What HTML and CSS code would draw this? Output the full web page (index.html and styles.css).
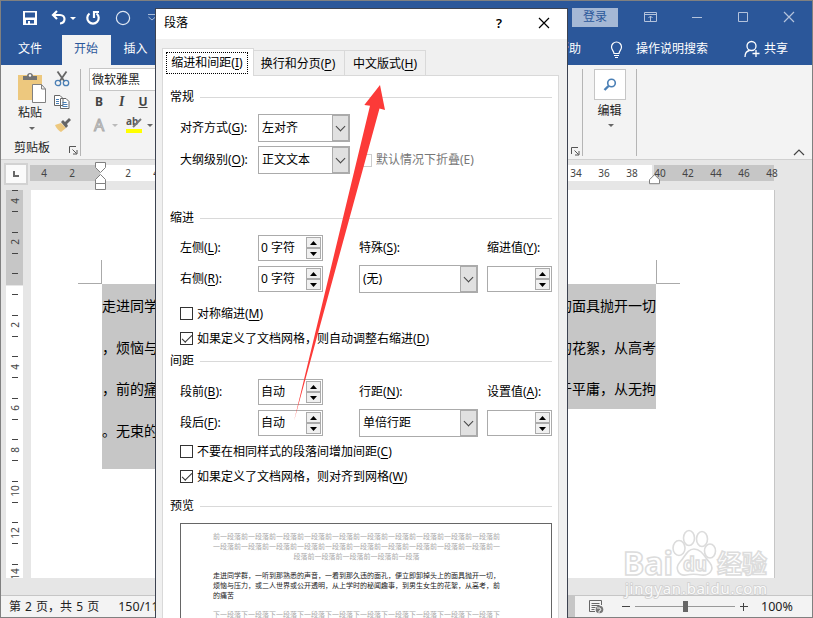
FILE: index.html
```html
<!DOCTYPE html>
<html lang="zh-CN">
<head>
    <meta charset="UTF-8">
    <meta name="viewport" content="width=device-width, initial-scale=1.0">
    <title>段落</title>
    <link rel="stylesheet" href="styles.css">
</head>
<body>
<div class="window">
    <header class="titlebar">
        <div class="quick">
            <svg width="16" height="16" viewBox="0 0 16 16"><path fill="#fff" fill-rule="evenodd" d="M1 1h14v14H1zM3 2.5v5h10v-5zM4 10v3.5h2V11h2v2.5h4V10z"/></svg>
            <svg class="undo" width="16" height="16" viewBox="0 0 16 16" fill="none" stroke="#fff" stroke-width="2.2"><path d="M6 1 2 5l4 4M2.5 5H9c6 0 6 8 0 8.5"/></svg>
            <i class="caret white"></i>
            <svg class="redo" width="16" height="16" viewBox="0 0 16 16" fill="none" stroke="#fff" stroke-width="2.2"><path d="M4.500 3.500A5.700 5.700 0 1 0 11.500 3.500M9 8V2h5"/></svg>
            <svg class="circle" width="16" height="16" viewBox="0 0 16 16" fill="none" stroke="#dfe7f3" stroke-width="1.2"><circle cx="8" cy="8" r="6.6"/></svg>
            <svg class="more" width="8" height="8" viewBox="0 0 8 8" fill="none" stroke="#a9bcd8"><path d="M0 .5h8M.5 3 4 6l3.5-3"/></svg>
        </div>
        <div class="controls">
            <span class="login">登录</span>
            <svg class="c1" width="14" height="12" viewBox="0 0 14 12" fill="none" stroke="#b4c3dc"><path d="M.5 1.5h12v9H.5zM.5 3.5h12M6.5 10V5M4.5 7l2-2 2 2"/></svg>
            <svg class="c2" width="10" height="12" viewBox="0 0 10 12" stroke="#b4c3dc"><path d="M0 6.5h10"/></svg>
            <svg class="c3" width="11" height="12" viewBox="0 0 11 12" fill="none" stroke="#b4c3dc"><path d="M.5 1.5h9v9h-9z"/></svg>
            <svg class="c4" width="12" height="12" viewBox="0 0 12 12" fill="none" stroke="#b4c3dc" stroke-width="1.2"><path d="m1 1 10 10M11 1 1 11"/></svg>
        </div>
    </header>
    <nav class="tabs">
        <span class="tab file">文件</span>
        <span class="tab on">开始</span>
        <span class="tab">插入</span>
        <div class="tell">
            <span>帮助</span>
            <svg class="bulb" width="13" height="18" viewBox="0 0 13 18" fill="none" stroke="#fff" stroke-width="1.2"><path d="M4 12.500C4 10 1.500 9 1.500 6a5 5 0 0 1 10 0c0 3-2.500 4-2.500 6.500zM4 14.500h5M5 16.500h3"/></svg>
            <span>操作说明搜索</span>
            <svg class="person" width="16" height="18" viewBox="0 0 16 18" fill="none" stroke="#fff" stroke-width="1.3"><circle cx="7.5" cy="6" r="4.5"/><path d="M1 17c0-4 2-6 4.500-6.500M12 10v7M8.500 13.500h7"/></svg>
            <span>共享</span>
        </div>
    </nav>
    <section class="ribbon">
        <div class="clipboard">
            <div class="group-top">
                <div class="paste">
                    <svg width="30" height="32" viewBox="0 0 30 32"><path fill="#edc87e" d="M1 3h24v25H1z"/><path fill="#737373" d="M6 8V4h4C10 0 16 0 16 4h4v4z"/><circle cx="13" cy="3.500" r="1.200" fill="#fff"/><path fill="#fff" stroke="#808080" d="M15.500 12.500h9l4 4.500v13.500h-13zM24.500 12.500V17h4"/></svg>
                    <span>粘贴</span>
                    <i class="caret"></i>
                </div>
                <div class="small-icons">
                    <svg width="16" height="16" viewBox="0 0 16 16" fill="none"><path stroke="#666" stroke-width="1.8" d="m3.500.5 7 10M12.500.5l-7 10"/><circle cx="4" cy="12" r="2.700" stroke="#4a7fb5" stroke-width="1.3"/><circle cx="12" cy="12" r="2.700" stroke="#4a7fb5" stroke-width="1.3"/></svg>
                    <svg width="16" height="16" viewBox="0 0 16 16" fill="#fff" stroke="#666"><path d="M.5 1.500H6l3 3v7H.5zM6.500 4.500H12l3 3v7H6.500z"/><path stroke="#4a7fb5" d="M2 5.500h3M2 7.500h3M2 9.500h3M8.500 8.500h4M8.500 10.500h5M8.500 12.500h5"/></svg>
                    <svg width="17" height="16" viewBox="0 0 17 16"><path fill="#edc87e" d="m1 8 6-2 5 5-5 4c-2-1-5-4-6-7z"/><path fill="#666" d="m7 5 2-2 2 2 4-4 2 2-4 4 1 2-2 2z"/></svg>
                </div>
            </div>
            <div class="group-name"><span>剪贴板</span>
                <svg width="9" height="9" viewBox="0 0 9 9" fill="none" stroke="#555"><path d="M.5 7V.5H7M3.500 3.500l4 4M8 4v4H4"/></svg>
            </div>
        </div>
        <div class="font">
            <div class="font-name">微软雅黑</div>
            <div class="styles"><b>B</b><i>I</i><u>U</u></div>
            <div class="colors">
                <span class="fx">A</span><i class="caret light"></i>
                <svg width="18" height="18" viewBox="0 0 18 18"><text x="0" y="9" font-size="10" font-weight="700" fill="#555">ab</text><path stroke="#777" stroke-width="2" d="m15 3-8 8"/><path fill="#ff0" d="M0 13h16v4H0z"/></svg>
                <i class="caret"></i>
            </div>
        </div>
        <div class="editing">
            <svg class="launch" width="9" height="9" viewBox="0 0 9 9" fill="none" stroke="#555"><path d="M.5 7V.5H7M3.500 3.500l4 4M8 4v4H4"/></svg>
            <div class="find-group">
                <div class="find"><svg width="14" height="14" viewBox="0 0 14 14" fill="none" stroke="#4a7fb5"><circle cx="8.5" cy="5" r="3.8" stroke-width="1.6"/><path stroke-width="2.4" d="M5.500 8 1.500 12"/></svg></div>
                <span>编辑</span>
                <i class="caret"></i>
            </div>
            <svg class="collapse" width="12" height="7" viewBox="0 0 12 7" fill="none" stroke="#444" stroke-width="1.2"><path d="m1 6 5-5 5 5"/></svg>
        </div>
    </section>
    <div class="hruler">
        <div class="corner"><span></span></div>
        <div class="track">
            <span>4</span><span>2</span><span></span><span>2</span><span>4</span><span class="covered"></span><span>34</span><span>36</span><span>38</span><span>40</span><span>42</span><span>44</span><span>46</span><span>48</span>
            <svg class="indent-left" width="12" height="29" viewBox="0 0 12 29" fill="#fff" stroke="#808080"><path d="M.5.500h10v5l-5 5-5-5zM5.500 12.500l5 5v4H.5v-4zM.5 21.500h10v6H.5z"/></svg>
            <svg class="indent-right" width="12" height="11" viewBox="0 0 12 11" fill="#fff" stroke="#808080"><path d="m5.500.700 5 5v4H.5v-4z"/></svg>
        </div>
    </div>
    <main class="work">
        <div class="vruler">
            <div><span>4</span></div><div><span>2</span></div><div></div><div><span>2</span></div><div><span>4</span></div><div><span>6</span></div><div><span>8</span></div><div><span>10</span></div><div><span>12</span></div><div><span>14</span></div>
        </div>
        <div class="page">
            <div class="crop"><i></i><i></i></div>
            <div class="text">
                <p><span>走进同学</span><span>的面具抛开一切</span></p>
                <p><span>，烦恼与</span><span>的花絮，从高考</span></p>
                <p><span>，前的<u>痛</u></span><span>于平庸，从无拘</span></p>
                <p class="last"><span>。无束的</span></p>
            </div>
        </div>
    </main>
    <footer class="status">
        <span class="pages">第 2 页，共 5 页</span>
        <span class="words">150/11</span>
        <div class="zoom">
            <i class="view"></i>
            <svg class="web" width="15" height="14" viewBox="0 0 15 14" fill="none" stroke="#666"><path d="M12.500 5V.5H.5v11H6M2.500 3.500h8M2.500 5.500h8M2.500 7.500h4M2.500 9.500h3"/><circle cx="10.500" cy="9.500" r="3.800" fill="#777" stroke="none"/><path stroke="#eee" d="M8 8h3l1 2-2 1v2"/></svg>
            <svg width="8" height="8" viewBox="0 0 8 8" stroke="#444"><path d="M0 3.500h8"/></svg>
            <div class="slider"><b></b></div>
            <svg width="8" height="8" viewBox="0 0 8 8" stroke="#444"><path d="M0 3.500h8M3.500 0v8"/></svg>
            <span class="percent">100%</span>
        </div>
    </footer>
</div>

<div class="dialog">
    <div class="dialog-title">
        <span>段落</span>
        <b>?</b>
        <svg width="12" height="12" viewBox="0 0 12 12" fill="none" stroke="#000" stroke-width="1.2"><path d="m1 1 10 10M11 1 1 11"/></svg>
    </div>
    <div class="dialog-tabs">
        <span class="active"><em>缩进和间距(<u>I</u>)</em></span><span class="wide">换行和分页(<u>P</u>)</span><span>中文版式(<u>H</u>)</span>
    </div>
    <div class="panel">
        <h3>常规</h3>
        <div class="grid general">
            <label>对齐方式(<u>G</u>):</label>
            <div class="combo short"><span>左对齐</span><i></i></div>
            <label class="outline">大纲级别(<u>O</u>):</label>
            <div class="combo short"><span>正文文本</span><i></i></div>
            <label class="check disabled"><i></i><span>默认情况下折叠(E)</span></label>
        </div>
        <h3 class="indent-title">缩进</h3>
        <div class="grid">
            <label>左侧(<u>L</u>):</label>
            <div class="spin"><span>0 字符</span><i></i></div>
            <label>特殊(<u>S</u>):</label>
            <label>缩进值(<u>Y</u>):</label>
            <label>右侧(<u>R</u>):</label>
            <div class="spin"><span>0 字符</span><i></i></div>
            <div class="combo"><span>(无)</span><i></i></div>
            <div class="spin"><span></span><i></i></div>
        </div>
        <div class="checks indent-checks">
            <label class="check"><i></i><span>对称缩进(<u>M</u>)</span></label>
            <label class="check on"><i></i><span>如果定义了文档网格，则自动调整右缩进(<u>D</u>)</span></label>
        </div>
        <h3>间距</h3>
        <div class="grid">
            <label>段前(<u>B</u>):</label>
            <div class="spin"><span>自动</span><i></i></div>
            <label>行距(<u>N</u>):</label>
            <label>设置值(<u>A</u>):</label>
            <label>段后(<u>F</u>):</label>
            <div class="spin"><span>自动</span><i></i></div>
            <div class="combo"><span>单倍行距</span><i></i></div>
            <div class="spin"><span></span><i></i></div>
        </div>
        <div class="checks">
            <label class="check"><i></i><span>不要在相同样式的段落间增加间距(<u>C</u>)</span></label>
            <label class="check on"><i></i><span>如果定义了文档网格，则对齐到网格(<u>W</u>)</span></label>
        </div>
        <h3 class="preview-title">预览</h3>
        <div class="preview">
            <p class="around">前一段落前一段落前一段落前一段落前一段落前一段落前一段落前一段落前一段落前一段落前<br>一段落前一段落前一段落前一段落前一段落前一段落前一段落前一段落前一段落前一段落前一<br>段落前一段落前一段落前一段落前一段落</p>
            <p>走进同学群，一听到那熟悉的声音，一看到那久违的面孔，便立即卸掉头上的面具抛开一切，<br>烦恼与压力，或二人世界或公开透明，从上学时的秘闻趣事，到男生女生的花絮，从高考，前<br>的痛苦</p>
            <p class="around">下一段落下一段落下一段落下一段落下一段落下一段落下一段落下一段落下一段落下一段落下</p>
        </div>
    </div>
</div>

<svg class="arrow" width="100" height="350" viewBox="290 80 100 350"><path fill="#fc3a38" d="M380 85 364.300 105 370 105.700 294 421 379.500 108.500 385 110z"/></svg>

<svg class="watermark" width="160" height="76" viewBox="0 0 160 76">
    <g class="mark">
        <text x="1" y="47" font-size="33" font-weight="700" textLength="50" lengthAdjust="spacingAndGlyphs">Bai</text>
        <ellipse cx="57" cy="20" rx="6" ry="7.5"/><ellipse cx="67" cy="10" rx="5.5" ry="7.5"/><ellipse cx="80" cy="11" rx="5.5" ry="7.5"/><ellipse cx="88" cy="23" rx="5.5" ry="7"/>
        <path d="M72 21c-7 0-9 8-14 13-6 7-1 14 6 13 5-1 10-1 15 0 8 1 14-5 9-12-5-5-8-14-16-14z"/>
        <text x="61" y="43" font-size="20" font-weight="700" textLength="24" lengthAdjust="spacingAndGlyphs">du</text>
        <text x="95" y="45" font-size="25" font-weight="700" textLength="50">经验</text>
    </g>
    <text class="site" x="3" y="66" font-size="15" textLength="142">jingyan.baidu.com</text>
</svg>
</body>
</html>
```
FILE: styles.css
```css
* { box-sizing: border-box; }
body {
    margin: 0;
    width: 813px;
    height: 618px;
    position: relative;
    overflow: hidden;
    font: 12px/16px "Noto Sans", "Noto Sans CJK SC", sans-serif;
    color: #222;
}
svg { display: block; flex: none; }
span, label { white-space: nowrap; }
.window {
    width: 813px;
    height: 618px;
    border: 1px solid #808080;
    background: #e6e6e6;
    display: flex;
    flex-direction: column;
}
.caret {
    flex: none;
    border: 3px solid transparent;
    border-top-color: #666;
    border-bottom: 0;
    width: 6px;
    height: 3px;
}
.caret.white { border-top-color: #fff; }
.caret.light { border-top-color: #bbb; }

/* title bar */
.titlebar {
    height: 34px;
    background: #2b579a;
    display: flex;
    justify-content: space-between;
    align-items: center;
}
.quick, .controls { display: flex; align-items: center; }
.quick { padding-left: 21px; }
.undo { margin: 0 3px 0 13px; }
.redo { margin-left: 9px; }
.circle { margin-left: 14px; }
.more { margin-left: 17px; }
.controls { padding: 0 17px 2px 0; }
.login {
    width: 46px;
    height: 19px;
    line-height: 18px;
    text-align: center;
    background: #a5b8d5;
    color: #2b579a;
}
.c1 { margin-left: 26px; }
.c2 { margin-left: 34px; }
.c3 { margin-left: 36px; }
.c4 { margin-left: 34px; }

/* ribbon tabs */
.tabs {
    height: 30px;
    background: #2b579a;
    color: #fff;
    display: flex;
    line-height: 27px;
}
.tab { width: 49px; text-align: center; }
.tab.file { width: 61px; padding-right: 3px; }
.tab.on { background: #f3f3f3; color: #2b579a; padding-right: 1px; }
.tell { margin-left: auto; padding-right: 24px; display: flex; }
.bulb { margin: 6px 13px 0 29px; }
.person { margin: 5px 4px 0 36px; }

/* ribbon */
.ribbon {
    height: 95px;
    background: #f3f3f3;
    border-bottom: 1px solid #d0d0d0;
    display: flex;
    padding-top: 4px;
}
.clipboard {
    width: 80px;
    height: 87px;
    border-right: 1px solid #b5b5b5;
    display: flex;
    flex-direction: column;
}
.group-top { display: flex; height: 70px; }
.paste {
    width: 52px;
    padding: 3px 0 0 16px;
    display: flex;
    flex-direction: column;
    align-items: flex-start;
}
.paste span { margin: 1px 0 0 1px; }
.paste .caret { margin: 6px 0 0 12px; }
.small-icons { display: flex; flex-direction: column; gap: 7px; padding: 2px 0 0 1px; }
.group-name { display: flex; justify-content: space-between; padding: 2px 2px 0 13px; }
.group-name svg { margin-top: 6px; }
.font { width: 80px; padding: 0 0 0 8px; margin-top: -1px; }
.font-name {
    height: 23px;
    background: #fff;
    border: 1px solid #c6c6c6;
    padding: 3px 2px;
}
.styles { display: flex; gap: 14px; padding: 3px 0 0 6px; color: #444; }
.styles i { font-family: "Liberation Serif", serif; font-weight: bold; font-size: 14px; }
.styles u { font-weight: bold; }
.styles i { margin-left: 2px; }
.colors { display: flex; align-items: center; padding: 6px 0 0 5px; }
.colors .caret { margin-left: 6px; }
.colors svg { margin-left: 8px; }
.colors svg + .caret { margin-left: 3px; }
.fx {
    width: 12px;
    font-size: 16px;
    color: #f3f3f3;
    -webkit-text-stroke: 1px #aaa;
}
.editing { margin-left: auto; height: 87px; display: flex; align-items: flex-end; }
.launch { margin: 0 2px 0 0; }
.find-group {
    width: 55px;
    height: 87px;
    border: solid #b5b5b5;
    border-width: 0 1px;
    display: flex;
    flex-direction: column;
    align-items: center;
}
.find {
    width: 32px;
    height: 31px;
    margin-bottom: 3px;
    background: #fff;
    border: 1px solid #c6c6c6;
    display: grid;
    place-items: center;
}
.find-group .caret { margin: 5px 0 0 3px; }
.collapse { margin: 0 7px 0 156px; }

/* rulers */
.hruler { height: 30px; display: flex; padding: 3px 0 0 3px; }
.corner {
    width: 24px;
    height: 22px;
    border: 2px solid #d2d2d2;
    background: #fafafa;
    display: grid;
    place-items: center;
}
.corner span { width: 6px; height: 6px; border: solid #666; border-width: 0 0 2px 2px; }
.track {
    position: relative;
    width: 744px;
    height: 16px;
    margin: 2px 0 0 2px;
    display: flex;
    font-size: 10px;
    color: #444;
    background: linear-gradient(to right, #c6c6c6 70px, #fff 70px 622px, #e6e6e6 622px 624px, #c6c6c6 624px);
}
.track span { flex: none; width: 28px; text-align: center; }
.track .covered { width: 392px; }
.indent-left { position: absolute; left: 65px; top: -3px; }
.indent-right { position: absolute; left: 619px; top: 9px; }
.work { height: 405px; display: flex; padding-left: 5px; }
.vruler {
    width: 17px;
    height: 388px;
    overflow: hidden;
    background: linear-gradient(#c6c6c6 95px, #e6e6e6 95px 96px, #fff 96px);
}
.vruler div {
    height: 41.5px;
    display: grid;
    place-items: center;
    background: linear-gradient(#444, #444) center 10px / 6px 1px no-repeat, linear-gradient(#444, #444) center 31px / 6px 1px no-repeat;
}
.vruler div:first-child { margin-top: -10px; }
.vruler span { transform: rotate(-90deg); font-size: 10px; line-height: 12px; color: #444; }
.page {
    width: 744px;
    height: 388px;
    margin-left: 8px;
    background: #fff;
    border-right: 1px solid #c6c6c6;
}
.crop { height: 94px; padding: 70px 94px 0 47px; display: flex; justify-content: space-between; }
.crop i { width: 24px; border: solid #aaa; border-width: 0 1px 1px 0; }
.crop i:last-child { border-width: 0 0 1px 1px; }
.text { width: 554px; margin-left: 71px; font-size: 14px; color: #000; }
.text p {
    margin: 0;
    height: 41.7px;
    line-height: 44px;
    background: #c6c6c6;
    display: flex;
    justify-content: space-between;
}
.text .last { width: 200px; height: 60px; }
.text u { text-underline-offset: 3px; }

/* status bar */
.status {
    flex: 1;
    background: #f3f3f3;
    border-top: 1px solid #c6c6c6;
    display: flex;
    align-items: center;
    padding: 0 19px 0 8px;
}
.pages { word-spacing: 1px; }
.words { margin-left: 19px; font-size: 12.5px; }
.zoom { margin-left: auto; display: flex; align-items: center; }
.view { width: 14px; height: 21px; background: #c6c6c6; }
.web { margin: 0 18px 0 14px; }
.slider {
    width: 100px;
    height: 11px;
    margin: 0 5px;
    background: linear-gradient(#999, #999) 0 5px / 100% 1px no-repeat;
}
.slider b { display: block; width: 5px; height: 11px; margin-left: 48px; background: #666; }
.percent { width: 32px; margin-left: 13px; font-size: 12.5px; }

/* paragraph dialog */
.dialog {
    position: absolute;
    left: 155px;
    top: 8px;
    width: 413px;
    height: 620px;
    background: #f0f0f0;
    border: 1px solid #3c4250;
    color: #000;
}
.dialog-title {
    height: 30px;
    background: #fff;
    display: flex;
    align-items: center;
    padding: 0 17px 2px 8px;
}
.dialog-title b { margin-left: auto; margin-right: 36px; font-size: 13px; font-weight: 600; }
.dialog-tabs { height: 36px; padding: 9px 0 0 6px; display: flex; align-items: flex-end; }
.dialog-tabs span {
    width: 81px;
    height: 25px;
    line-height: 26px;
    text-align: center;
    border: 1px solid #d9d9d9;
    border-left: 0;
    border-bottom: 0;
}
.dialog-tabs .wide { width: 91px; padding-right: 2px; }
.dialog-tabs .active {
    width: 92px;
    height: 28px;
    margin-bottom: -1px;
    padding: 3px 5px 3px 3px;
    background: #fff;
    border-left: 1px solid #d9d9d9;
    z-index: 1;
}
.active em {
    display: block;
    height: 22px;
    line-height: 19px;
    font-style: normal;
    border: 1px dotted #000;
}
.dialog u { text-underline-offset: 2px; }
.panel {
    width: 397px;
    height: 560px;
    margin-left: 6px;
    padding: 11px 6px 0 7px;
    background: #fff;
    border: 1px solid #d9d9d9;
}
.panel h3 {
    margin: 0;
    height: 20px;
    line-height: 20px;
    font-size: 12px;
    font-weight: normal;
    display: flex;
    align-items: center;
    gap: 6px;
}
.panel h3::after { content: ""; flex: 1; height: 1px; background: #d9d9d9; }
.panel .indent-title { margin-top: 32px; }
.panel .preview-title { margin-top: 7px; }
.grid {
    display: grid;
    grid-template-columns: 78px 101px 128px 65px;
    grid-auto-rows: 30px;
    row-gap: 1px;
    align-items: center;
    padding: 5px 0 0 10px;
}
.general { grid-auto-rows: 32px; row-gap: 0; }
.outline { grid-column: 1; }
.combo, .spin {
    display: flex;
    justify-content: space-between;
    background: #fff;
    border: 1px solid #ababab;
}
.combo { width: 119px; height: 28px; line-height: 26px; padding-left: 3px; }
.combo.short { width: 92px; }
.combo i {
    width: 17px;
    border: 1px solid #ababab;
    background: #e1e1e1;
    display: grid;
    place-items: center;
}
.combo i::after {
    content: "";
    width: 6px;
    height: 6px;
    margin-top: -4px;
    border: solid #444;
    border-width: 0 1px 1px 0;
    transform: rotate(45deg);
}
.spin { width: 65px; height: 26px; line-height: 21px; padding: 1px 1px 1px 2px; }
.spin i {
    width: 15px;
    background: linear-gradient(#ababab, #ababab) 0 9px / 100% 2px no-repeat, #f0f0f0;
    border: 1px solid #ababab;
}
.spin i::before, .spin i::after {
    content: "";
    display: block;
    width: 7px;
    height: 4px;
    margin: 3px auto 0;
    background: #000;
    clip-path: polygon(50% 0, 100% 100%, 0 100%);
}
.spin i::after { margin-top: 7px; clip-path: polygon(0 0, 100% 0, 50% 100%); }
.checks { padding: 1px 0 0 10px; }
.indent-checks { padding-top: 7px; }
.indent-checks + h3 { margin-bottom: 1px; }
.indent-checks + h3 + .grid { padding-top: 5px; }
.check { display: flex; align-items: center; gap: 4px; height: 25px; }
.check i { flex: none; width: 13px; height: 13px; border: 1px solid #333; background: #fff; }
.check.on i::after {
    content: "";
    display: block;
    width: 9px;
    height: 4px;
    margin: 2px 0 0 1px;
    border: solid #333;
    border-width: 0 0 1.4px 1.4px;
    transform: rotate(-45deg);
}
.check.disabled { color: #777; }
.check.disabled i { border-color: #ccc; }
.preview {
    width: 372px;
    height: 120px;
    margin: 7px 0 0 10px;
    border: 1px solid #666;
    padding: 7px 0 0 32px;
    font: 7px/10px "Noto Sans CJK SC", sans-serif;
    color: #222;
}
.preview p { width: 287px; margin: 0 0 9px; white-space: nowrap; }
.preview .around { color: #aaa; text-align: center; }

/* overlays */
.arrow { position: absolute; left: 290px; top: 80px; }
.watermark { position: absolute; left: 622px; top: 528px; overflow: visible; }
.mark { fill: #fff; stroke: #dcdcdc; stroke-width: 1.6px; }
.site { fill: #fafafa; stroke: #cfcfcf; stroke-width: 1.6px; paint-order: stroke; }
```
